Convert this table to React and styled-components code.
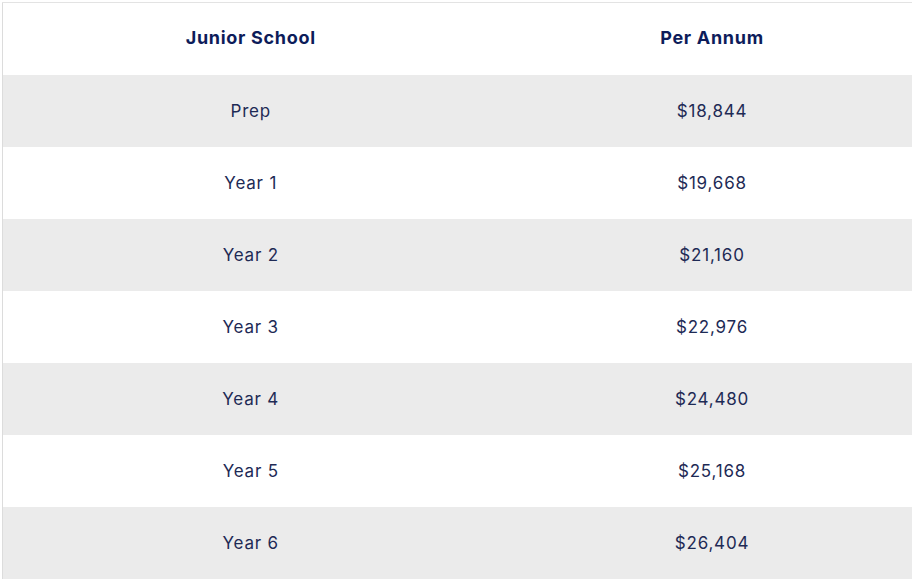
import React from "react";
import styled, { createGlobalStyle } from "styled-components";

const Global = createGlobalStyle`
  html, body { margin: 0; padding: 0; background: #fff; overflow: hidden; }
  body { font-family: Inter, "Noto Sans", sans-serif; }
`;

const Wrap = styled.div`
  padding: 2px 0 0 2px;
  width: 930px;
`;

const Table = styled.table`
  border-collapse: collapse;
  border-top: 1px solid #e3e3e3;
  border-left: 1px solid #dcdcdc;
  table-layout: fixed;
  width: 923px;
`;

const Col = styled.col`
  width: ${(p) => p.$w}px;
`;

const HeadCell = styled.th`
  height: 72px;
  padding: 0 0 2px;
  box-sizing: border-box;
  text-align: center;
  font-weight: 700;
  font-size: 18px;
  color: #0d1c5a;
  letter-spacing: 0.7px;
`;

const Row = styled.tr`
  background: ${(p) => (p.$alt ? "#ebebeb" : "#ffffff")};
`;

const Cell = styled.td`
  height: 72px;
  padding: 0;
  text-align: center;
  font-weight: 400;
  font-size: 17px;
  color: #1e2a55;
  letter-spacing: 0.8px;
`;

const rows = [
  ["Prep", "$18,844"],
  ["Year 1", "$19,668"],
  ["Year 2", "$21,160"],
  ["Year 3", "$22,976"],
  ["Year 4", "$24,480"],
  ["Year 5", "$25,168"],
  ["Year 6", "$26,404"],
];

export default function App() {
  return (
    <>
      <Global />
      <Wrap>
        <Table>
          <colgroup>
            <Col $w={496} />
            <Col $w={427} />
          </colgroup>
          <thead>
            <tr>
              <HeadCell>Junior School</HeadCell>
              <HeadCell>Per Annum</HeadCell>
            </tr>
          </thead>
          <tbody>
            {rows.map(([a, b], i) => (
              <Row key={a} $alt={i % 2 === 0}>
                <Cell>{a}</Cell>
                <Cell>{b}</Cell>
              </Row>
            ))}
          </tbody>
        </Table>
      </Wrap>
    </>
  );
}
